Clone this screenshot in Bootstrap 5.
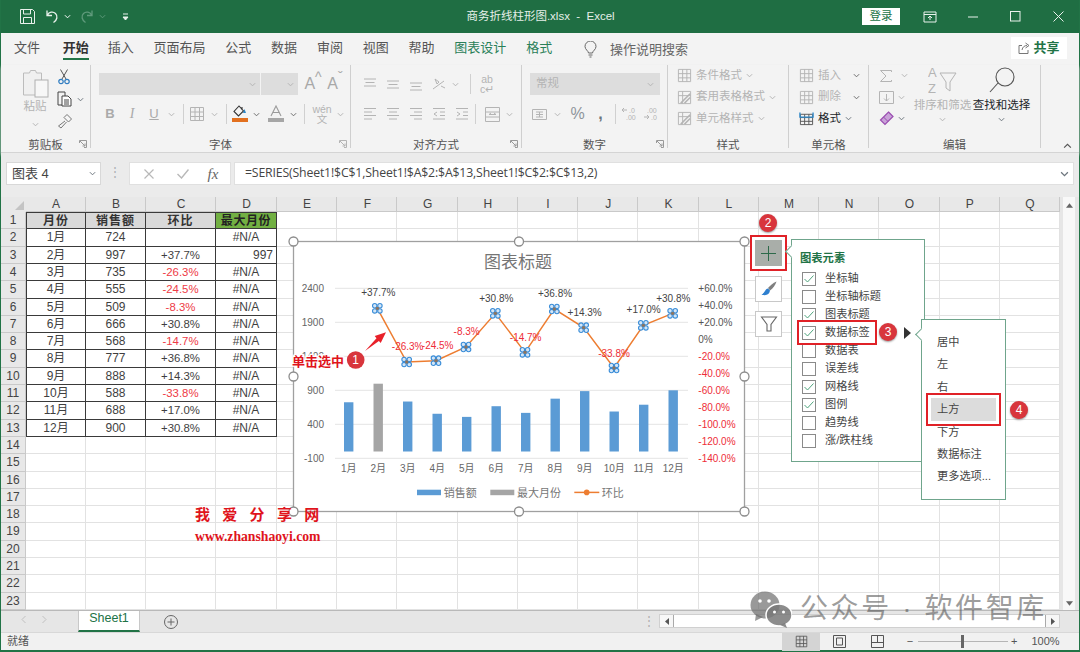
<!DOCTYPE html>
<html lang="zh-CN">
<head>
<meta charset="UTF-8">
<title>商务折线柱形图.xlsx - Excel</title>
<link href="https://cdn.jsdelivr.net/npm/bootstrap@5.3.3/dist/css/bootstrap.min.css" rel="stylesheet">
<style>
html, body { height: 100%; }
body { width: 1080px; height: 652px; overflow: hidden; background: #f3f3f3; color: #444;
  font-family: "Liberation Sans", "Noto Sans CJK SC", sans-serif; font-size: 12px; line-height: 1.2; position: relative; }
.win-edge { border-left: 1px solid #217346; border-right: 1px solid #217346; border-bottom: 2px solid #217346; height: 652px; }
svg { display: block; flex: none; }

/* title bar */
.title-bar { height: 33px; background: #1f6e43; color: #e6efe9; font-size: 11.5px; }
.title-side { flex: 1 1 0; }
.qat-start { margin-left: 18px; }
.title-end { margin-right: -1px; }
.login-btn { width: 38px; height: 17px; background: #fff; color: #217346; font-size: 11.5px; line-height: 17px; text-align: center; margin-right: 8px; }
.win-btn { width: 43px; }

/* tabs */
.tab-row { height: 32px; padding-left: 13px; gap: 19.8px; font-size: 13px; color: #555; position: relative; }
.tab-item { height: 32px; line-height: 29px; position: relative; }
.tab-on { font-weight: 700; color: #333; margin: 0 -1px 0 3px; }
.tab-on::after { content: ""; position: absolute; left: 0; right: 0; bottom: 5px; height: 2px; background: #217346; }
.tab-ctx { color: #2a8058; }
.tell-me { margin-left: 12px; gap: 13px; color: #666; }
.share-btn { position: absolute; left: 1010px; top: 4px; width: 56px; height: 22px; background: #fff; color: #217346; font-weight: 700; font-size: 13px; gap: 3px; }

/* ribbon */
.ribbon { height: 88px; border-bottom: 1px solid #d4d4d4; box-shadow: 0 2px 3px #d0d0d0; position: relative; }
.rb-group { height: 83px; border-right: 1px solid #cfcfcf; position: relative; flex: none; }
.rb-label { position: absolute; left: 0; right: 0; top: 73px; text-align: center; font-size: 11.5px; line-height: 14px; color: #555; }
.rb-launch { position: absolute; right: 3px; top: 75px; color: #999; }
.g-clip { width: 90px; } .g-font { width: 260px; padding-left: 8px; } .g-align { width: 171px; padding-left: 8px; }
.g-num { width: 146px; padding-left: 8px; } .g-style { width: 121px; padding-left: 9px; } .g-cell { width: 80px; padding-left: 10px; } .g-edit { width: 172px; padding-left: 10px; }
.rb-row1 { height: 22px; margin-top: 8px; }
.rb-row2 { height: 24px; margin-top: 7px; }
.off { color: #b4b4b4; }
.mid { color: #6a6a6a; }
.cell-c { display: flex; align-items: center; justify-content: center; flex: none; }
.w4 { width: 4px; } .w6 { width: 6px; } .w10 { width: 10px; } .w12 { width: 12px; } .w14 { width: 14px; } .w16 { width: 16px; } .w18 { width: 18px; } .w20 { width: 20px; } .w22 { width: 22px; } .w23 { width: 23px; } .w30 { width: 30px; }
.rb-sep { width: 1px; height: 20px; background: #d0d0d0; }
.combo-a { width: 161px; height: 22px; background: #dddddd; }
.combo-b { width: 37px; height: 22px; background: #dddddd; margin-left: 1px; }
.combo-c { width: 130px; height: 22px; background: #dddddd; padding: 0 6px; color: #b4b4b4; font-size: 11.5px; }
.combo-ch { margin-left: auto; }
.letter-a { font-size: 16px; color: #a8a8a8; line-height: 16px; }
.txt-b { font-weight: 700; font-size: 13px; color: #aaa; }
.txt-i { font-style: italic; font-family: "Liberation Serif", serif; font-size: 14px; color: #aaa; }
.clip-col { width: 52px; padding-left: 16px; padding-top: 3px; }
.clip-txt { font-size: 11.5px; color: #b4b4b4; margin-top: 2px; }
.clip-tools { gap: 6px; padding-top: 4px; }
.st-row { height: 21.5px; gap: 4px; font-size: 11.5px; }
.st-wrap { margin-top: 0; }
.big-col { width: 59px; text-align: center; font-size: 11.5px; }
.big-ico { height: 34px; }
.ed-left { width: 34px; }
.collapse-up { position: absolute; left: 1062px; top: 78px; color: #555; }

/* formula bar */
.f-bar { height: 44px; background: #ebebeb; padding-top: 9px; padding-left: 5px; position: relative; }
.f-name { width: 95px; height: 23px; background: #fff; border: 1px solid #d8d8d8; padding: 0 4px 0 5px; font-size: 13px; }
.f-dots { width: 28px; }
.f-btns { width: 102px; height: 23px; background: #fff; border: 1px solid #e0e0e0; }
.f-input { width: 840px; height: 23px; background: #fff; border: 1px solid #e0e0e0; margin-left: 3px; padding: 0 4px 0 10px; color: #444; font-size: 12.3px; font-family: "Open Sans", "Liberation Sans", sans-serif; letter-spacing: -.17px; }
.fx-mark { font-family: "Liberation Serif", serif; font-style: italic; font-size: 15px; color: #666; }

/* sheet */
.sheet-zone { height: 413px; background: #e6e6e6; }
.xl-grid { width: 1059px; height: 413px; display: grid; grid-template-columns: 25px 60px 60px 70px 61px repeat(13, 1fr); grid-template-rows: 15px repeat(23, 1fr); background: #fff; overflow: hidden; }
.xc { border-right: 1px solid #e2e2e2; border-bottom: 1px solid #e2e2e2; color: #3f3f3f; font-size: 12px; line-height: 16px; text-align: center; white-space: nowrap; overflow: hidden; }
.xh { background: #e8e8e8; border-color: #c9c9c9; color: #444; }
.xcol { line-height: 15px; padding-left: 1px; }
.xcorner { background: #e8e8e8; border-color: #c9c9c9; position: relative; }
.xcorner::after { content: ""; position: absolute; right: 2px; bottom: 2px; border-style: solid; border-width: 0 0 9px 9px; border-color: transparent transparent #c4c4c4 transparent; }
.xd { border-color: #3a3a3a; }
.xd-top { border-top: 1px solid #3a3a3a; }
.xd-left { border-left: 1px solid #3a3a3a; }
.xb { font-weight: 700; background: #d9d9d9; color: #333; letter-spacing: 1px; }
.xg { font-weight: 700; background: #72b043; color: #222; letter-spacing: .6px; }
.xr { text-align: right; padding-right: 3px; }
.xp { font-size: 11.4px; }
.xneg { color: #ee3b46; }
.vscroll { width: 12px; height: 413px; margin-left: 3px; background: #f8f8f8; color: #666; padding: 6px 0 4px; }

/* sheet tabs */
.tabs-bar { height: 22px; background: #e6e6e6; border-top: 1px solid #b9b9b9; position: relative; }
.tabs-nav { width: 77px; padding-left: 20px; color: #c0c0c0; }
.sheet-tab { width: 62px; height: 21px; background: #fff; color: #217346; font-size: 12.5px; line-height: 15px; text-align: center; border-bottom: 2px solid #217346; border-left: 1px solid #c8c8c8; border-right: 1px solid #c8c8c8; }
.add-sheet { margin-left: 24px; color: #666; }
.h-dots { width: 8px; margin-left: 465px; color: #b0b0b0; }
.hscroll { width: 401px; height: 14px; margin-left: 8px; margin-top: 3px; background: #f7f7f7; border: 1px solid #d0d0d0; color: #555; }
.h-end { width: 13px; height: 12px; }
.h-thumb { height: 12px; background: #fff; border-left: 1px solid #aaa; border-right: 1px solid #aaa; flex: 1 1 0; }
.status-bar { height: 18px; background: #f1f1f1; border-top: 1px solid #d8d8d8; font-size: 11px; color: #555; padding-left: 6px; }
.view-on { width: 38px; height: 18px; background: #d4d4d4; margin-left: 753px; }
.view-btn { width: 38px; height: 18px; color: #555; }
.zoom-minus { width: 10px; margin-left: 9px; text-align: center; }
.zoom-track { width: 90px; height: 1px; background: #b5b5b5; position: relative; margin: 0 3px; }
.zoom-track::after { content: ""; position: absolute; left: 43px; top: -6px; width: 3px; height: 13px; background: #666; }
.zoom-pct { margin-left: 14px; }

/* what floats over the sheet */
.chart-svg { position: absolute; left: 285px; top: 235px; }
.tool-btn { position: absolute; left: 755px; width: 27px; height: 26px; background: #fff; border: 1px solid #c8c8c8; }
.tool-plus { top: 240px; background: #a9aea9; border-color: #a9aea9; box-shadow: 0 0 0 3px #fff, 0 0 0 5px #e02127; }
.tool-brush { top: 276px; }
.tool-filter { top: 311px; }
.chart-pane { position: absolute; left: 791px; top: 239px; width: 134px; height: 223px; background: #fff; border: 1px solid #6fa58c; padding: 10px 0 0 10px; }
.pane-title { color: #217346; font-weight: 700; font-size: 11.3px; line-height: 16px; margin: 0 0 4px -2px; }
.pane-notch { position: absolute; width: 9px; height: 9px; background: #fff; border-left: 1px solid #6fa58c; border-bottom: 1px solid #6fa58c; transform: rotate(45deg); }
.notch-a { left: -5px; top: 7px; }
.notch-b { left: -5px; top: 10px; }
.check-row { height: 18px; gap: 9px; font-size: 11.2px; color: #444; }
.check-box { width: 14px; height: 14px; background: #fff; border: 1px solid #8a8a8a; flex: none; }
.check-hit { position: relative; z-index: 1; }
.check-hit::before { content: ""; position: absolute; left: -5px; top: -4px; width: 80px; height: 25px; background: #fff; border: 2px solid #e02127; z-index: -1; }
.sub-menu { position: absolute; left: 921px; top: 319px; width: 85px; height: 181px; background: #fff; border: 1px solid #6fa58c; padding: 11px 0 0 9px; }
.sub-item { width: 65px; height: 22.4px; line-height: 22.4px; padding-left: 6px; font-size: 11.2px; color: #444; }
.sub-on { background: #dcdcdc; box-shadow: 0 0 0 3px #fff, 0 0 0 5px #e02127; position: relative; z-index: 1; }
.play-arrow { position: absolute; left: 904px; top: 327px; border-style: solid; border-width: 6px 0 6px 7px; border-color: transparent transparent transparent #333; }
.step-badge { position: absolute; width: 18px; height: 18px; background: #d8353c; color: #fff; font-size: 12px; line-height: 18px; text-align: center; box-shadow: 0 1px 2px #999; z-index: 2; }
.step-2 { left: 759px; top: 214px; }
.step-3 { left: 879px; top: 323px; }
.step-4 { left: 1010px; top: 401px; }
.mark-cn { position: absolute; left: 195px; top: 505px; color: #e0141c; font-size: 15px; font-weight: 700; letter-spacing: 12.3px; line-height: 20px; white-space: nowrap; }
.mark-url { position: absolute; left: 195px; top: 529px; color: #e0141c; font-family: "Liberation Serif", serif; font-size: 13.7px; font-weight: 700; line-height: 15px; white-space: nowrap; }
.wx-mark { position: absolute; left: 750px; top: 590px; gap: 8px; color: rgba(90, 90, 90, .6); font-size: 28px; line-height: 36px; letter-spacing: 2.6px; white-space: nowrap; z-index: 3; }
</style>
</head>
<body>

<svg class="d-none">
  <symbol id="chev" viewBox="0 0 8 5"><path d="M1 1l3 3 3-3" fill="none" stroke="currentColor" stroke-width="1.1"/></symbol>
  <symbol id="al-top" viewBox="0 0 16 16"><path d="M2 3h12M3.500 6.500h9M2 10h12" fill="none" stroke="currentColor"/></symbol>
  <symbol id="al-mid" viewBox="0 0 16 16"><path d="M2 5h12M3.500 8.500h9M2 12h12" fill="none" stroke="currentColor"/></symbol>
  <symbol id="al-bot" viewBox="0 0 16 16"><path d="M2 7h12M3.500 10.500h9M2 14h12" fill="none" stroke="currentColor"/></symbol>
  <symbol id="al-left" viewBox="0 0 16 16"><path d="M2 2.500h12M2 6h8M2 9.500h12M2 13h8" fill="none" stroke="currentColor"/></symbol>
  <symbol id="al-center" viewBox="0 0 16 16"><path d="M2 2.500h12M4 6h8M2 9.500h12M4 13h8" fill="none" stroke="currentColor"/></symbol>
  <symbol id="al-right" viewBox="0 0 16 16"><path d="M2 2.500h12M6 6h8M2 9.500h12M6 13h8" fill="none" stroke="currentColor"/></symbol>
  <symbol id="al-out" viewBox="0 0 16 16"><path d="M2 2.500h12M9 6h5M9 9.500h5M2 13h12M6 6L3 8l3 2" fill="none" stroke="currentColor"/></symbol>
  <symbol id="al-in" viewBox="0 0 16 16"><path d="M2 2.500h12M9 6h5M9 9.500h5M2 13h12M3 6l3 2-3 2" fill="none" stroke="currentColor"/></symbol>
  <symbol id="tbl" viewBox="0 0 16 16"><path d="M1.500 1.500h13v13h-13zM1.500 6h13M1.500 10.500h13M6 1.500v13M10.500 1.500v13" fill="none" stroke="currentColor"/></symbol>
  <symbol id="tbl-slash" viewBox="0 0 16 16"><path d="M1.500 1.500h13v13h-13zM1.500 6h13M6 1.500v13" fill="none" stroke="currentColor"/><path d="M4 14L14 4M8 14l6-6" stroke="currentColor" stroke-width="1.600"/></symbol>
</svg>

<div class="win-edge d-flex flex-column">

  <!-- title bar -->
  <div class="title-bar d-flex align-items-center">
    <div class="title-side d-flex align-items-center">
      <svg class="qat-start" width="17" height="17" viewBox="0 0 17 17"><path d="M1.500 1.500h12l2 2v12h-14zM4.500 1.500v4.500h7V1.500M4.500 15.500v-6h8v6" fill="none" stroke="#e9f1ec"/></svg>
      <svg class="ms-2" width="16" height="16" viewBox="0 0 16 16"><path d="M3 1.500v5h5M3.500 6C5 3 9 2 11.500 4.500c2.500 2.500 1.800 6.500-2 9" fill="none" stroke="#e9f1ec" stroke-width="1.300"/></svg>
      <svg class="ms-1 text-white" width="7" height="5"><use href="#chev"/></svg>
      <svg class="ms-2" width="16" height="16" viewBox="0 0 16 16"><path d="M13 1.500v5H8M12.500 6C11 3 7 2 4.500 4.500c-2.500 2.500-1.800 6.500 2 9" fill="none" stroke="#5f9a7b" stroke-width="1.300"/></svg>
      <svg class="ms-1" width="7" height="5" color="#5f9a7b"><use href="#chev"/></svg>
      <svg class="ms-3" width="7" height="8" viewBox="0 0 7 8"><path d="M1 1h5M1 4l2.500 3L6 4z" fill="#e9f1ec" stroke="#e9f1ec"/></svg>
    </div>
    <div>商务折线柱形图.xlsx&nbsp; - &nbsp;Excel</div>
    <div class="title-side title-end d-flex align-items-center justify-content-end">
      <div class="login-btn">登录</div>
      <div class="win-btn cell-c"><svg width="14" height="12" viewBox="0 0 14 12"><path d="M1 1h12v10H1zM1 3.500h12M7 5v4M5 7l2-2 2 2" fill="none" stroke="#e9f1ec"/></svg></div>
      <div class="win-btn cell-c"><svg width="10" height="2"><path d="M0 1h10" stroke="#e9f1ec"/></svg></div>
      <div class="win-btn cell-c"><svg width="11" height="11"><rect x=".5" y=".5" width="9.500" height="9.500" fill="none" stroke="#e9f1ec"/></svg></div>
      <div class="win-btn cell-c"><svg width="11" height="11"><path d="M.5.500l10 10M10.500.500l-10 10" stroke="#e9f1ec"/></svg></div>
    </div>
  </div>

  <!-- tabs -->
  <div class="tab-row d-flex">
    <div class="tab-item">文件</div>
    <div class="tab-item tab-on">开始</div>
    <div class="tab-item">插入</div>
    <div class="tab-item">页面布局</div>
    <div class="tab-item">公式</div>
    <div class="tab-item">数据</div>
    <div class="tab-item">审阅</div>
    <div class="tab-item">视图</div>
    <div class="tab-item">帮助</div>
    <div class="tab-item tab-ctx">图表设计</div>
    <div class="tab-item tab-ctx">格式</div>
    <div class="tab-item tell-me d-flex align-items-center">
      <svg width="13" height="17" viewBox="0 0 13 17"><path d="M4.500 12c0-2-3.500-3.500-3.500-6.500a5.500 5.500 0 0111 0C12 8.500 8.500 10 8.500 12zM4.500 14h4M5.500 16h2" fill="none" stroke="#666"/></svg>
      <span>操作说明搜索</span>
    </div>
    <div class="share-btn d-flex align-items-center justify-content-center">
      <svg width="12" height="12" viewBox="0 0 12 12"><path d="M4 3.500H1v8h9V8M4 8c.500-3 2.500-4.500 5-4.500M7.500 1L11 3.500 7.500 6" fill="none" stroke="#777"/></svg>
      <span>共享</span>
    </div>
  </div>

  <!-- ribbon -->
  <div class="ribbon d-flex">

    <div class="rb-group g-clip d-flex">
      <div class="clip-col d-flex flex-column align-items-center">
        <svg width="27" height="30" viewBox="0 0 27 30"><path d="M1.500 5h6l1-2.500h5l1 2.500h5v22h-18z" fill="#f0f0f0" stroke="#bcbcbc"/><rect x="13" y="12" width="13" height="17" fill="#f7f7f7" stroke="#b0b0b0"/></svg>
        <div class="clip-txt">粘贴</div>
        <svg class="off mt-2" width="7" height="5"><use href="#chev"/></svg>
      </div>
      <div class="clip-tools d-flex flex-column ps-1">
        <svg width="14" height="16" viewBox="0 0 14 16"><path d="M3.500 0.500L9 10M10.500 0.500L5 10" stroke="#555" fill="none"/><circle cx="4" cy="12.500" r="2.200" fill="none" stroke="#2f7cc1" stroke-width="1.200"/><circle cx="10" cy="12.500" r="2.200" fill="none" stroke="#2f7cc1" stroke-width="1.200"/></svg>
        <div class="d-flex align-items-center">
          <svg width="16" height="16" viewBox="0 0 16 16"><path d="M1 1h7v4M5 14H1V1" fill="none" stroke="#444"/><path d="M5 5h6l3 3v7H5zM7 9h5M7 11h5M7 13h5" fill="#fff" stroke="#444"/></svg>
          <svg class="ms-1 text-secondary" width="7" height="5"><use href="#chev"/></svg>
        </div>
        <svg width="16" height="16" viewBox="0 0 16 16"><path d="M10 1.500l4.500 4.500-3 3L7 4.500zM8 8L1.500 13l2.500 2 5.500-6" fill="#f5f5f5" stroke="#777"/></svg>
      </div>
      <div class="rb-label">剪贴板</div>
      <svg class="rb-launch" width="8" height="8" viewBox="0 0 8 8"><path d="M.5 3V.500H7.500V7.500H5M1 1l5 5M6 3.500V6H3.500" fill="none" stroke="currentColor"/></svg>
    </div>

    <div class="rb-group g-font">
      <div class="rb-row1 d-flex align-items-center">
        <div class="combo-a d-flex align-items-center pe-1"><svg class="combo-ch off" width="7" height="5"><use href="#chev"/></svg></div>
        <div class="combo-b d-flex align-items-center pe-1"><svg class="combo-ch off" width="7" height="5"><use href="#chev"/></svg></div>
        <div class="cell-c w22 ms-1 letter-a">A<sup class="small">^</sup></div>
        <div class="cell-c w22 letter-a">A<sup class="small">ˇ</sup></div>
      </div>
      <div class="rb-row2 d-flex align-items-center">
        <div class="cell-c w22 txt-b">B</div>
        <div class="cell-c w22 txt-i">I</div>
        <div class="cell-c w22 txt-b fw-normal text-decoration-underline">U</div>
        <div class="cell-c w12 off"><svg width="7" height="5"><use href="#chev"/></svg></div>
        <div class="cell-c w12"><div class="rb-sep"></div></div>
        <div class="cell-c w16 off"><svg width="16" height="16"><use href="#tbl"/></svg></div>
        <div class="cell-c w18 off"><svg width="7" height="5"><use href="#chev"/></svg></div>
        <div class="cell-c w6"><div class="rb-sep"></div></div>
        <div class="cell-c w22"><svg width="16" height="18" viewBox="0 0 16 18"><path d="M7 1l-5 5.500 4.500 4.500 5-5zM10 2v3" fill="none" stroke="#333" stroke-width="1.100"/><path d="M12.500 4l1.500 4h-3z" fill="#2a86c8"/><rect y="13" width="16" height="4" fill="#e2701f"/></svg></div>
        <div class="cell-c w10 mid"><svg width="7" height="5"><use href="#chev"/></svg></div>
        <div class="cell-c w30"><svg width="16" height="18" viewBox="0 0 16 18"><path d="M3 11L8 1l5 10M5 7.500h6" fill="none" stroke="#9a9a9a" stroke-width="1.100"/><rect y="13" width="16" height="4" fill="#a6a6a6"/></svg></div>
        <div class="cell-c w4 mid"><svg width="7" height="5"><use href="#chev"/></svg></div>
        <div class="cell-c w18"><div class="rb-sep"></div></div>
        <div class="cell-c w18 off lh-1 flex-column"><span class="small">wén</span><span class="small">文</span></div>
        <div class="cell-c w18 off"><svg width="7" height="5"><use href="#chev"/></svg></div>
      </div>
      <div class="rb-label">字体</div>
      <svg class="rb-launch off" width="8" height="8" viewBox="0 0 8 8"><path d="M.5 3V.500H7.500V7.500H5M1 1l5 5M6 3.500V6H3.500" fill="none" stroke="currentColor"/></svg>
    </div>

    <div class="rb-group g-align off">
      <div class="rb-row1 d-flex align-items-center">
        <div class="cell-c w22"><svg width="16" height="16"><use href="#al-top"/></svg></div>
        <div class="cell-c w23"><svg width="16" height="16"><use href="#al-mid"/></svg></div>
        <div class="cell-c w23"><svg width="16" height="16"><use href="#al-bot"/></svg></div>
        <div class="cell-c w23"><svg width="16" height="16" viewBox="0 0 16 16"><path d="M2 13L13 5M4 3l4 3-2 2zM10 10l4 2" fill="none" stroke="currentColor"/></svg></div>
        <div class="cell-c w10"><svg width="7" height="5"><use href="#chev"/></svg></div>
        <div class="cell-c w20"><div class="rb-sep"></div></div>
        <div class="cell-c w14 lh-1 flex-column"><span class="small">ab</span><span class="small">c↵</span></div>
      </div>
      <div class="rb-row2 d-flex align-items-center">
        <div class="cell-c w22"><svg width="16" height="16"><use href="#al-left"/></svg></div>
        <div class="cell-c w23"><svg width="16" height="16"><use href="#al-center"/></svg></div>
        <div class="cell-c w23"><svg width="16" height="16"><use href="#al-right"/></svg></div>
        <div class="cell-c w23"><svg width="16" height="16"><use href="#al-out"/></svg></div>
        <div class="cell-c w23"><svg width="16" height="16"><use href="#al-in"/></svg></div>
        <div class="cell-c w4"><div class="rb-sep"></div></div>
        <div class="cell-c w22 ms-1"><svg width="15" height="15" viewBox="0 0 15 15"><path d="M.5.500h14v14H.5zM.5 5h14M.5 10h14M4 7.500h7M4 7.500l2-1.500M11 7.500l-2-1.500" fill="none" stroke="currentColor"/></svg></div>
        <div class="cell-c w12"><svg width="7" height="5"><use href="#chev"/></svg></div>
      </div>
      <div class="rb-label">对齐方式</div>
      <svg class="rb-launch" width="8" height="8" viewBox="0 0 8 8"><path d="M.5 3V.500H7.500V7.500H5M1 1l5 5M6 3.500V6H3.500" fill="none" stroke="currentColor"/></svg>
    </div>

    <div class="rb-group g-num off">
      <div class="rb-row1 d-flex align-items-center">
        <div class="combo-c d-flex align-items-center"><span>常规</span><svg class="combo-ch" width="7" height="5"><use href="#chev"/></svg></div>
      </div>
      <div class="rb-row2 d-flex align-items-center">
        <div class="cell-c w18"><svg width="15" height="15" viewBox="0 0 15 15"><path d="M.5 2.500h14v10H.5zM4 5h7M4 7.500h7M4 10h7M7.500 5v5" fill="none" stroke="currentColor"/></svg></div>
        <div class="cell-c w18"><svg width="7" height="5"><use href="#chev"/></svg></div>
        <div class="cell-c w23 fs-6 text-secondary opacity-75">%</div>
        <div class="cell-c w23 fw-bold fs-6 text-secondary">,</div>
        <div class="cell-c w6"><div class="rb-sep"></div></div>
        <div class="cell-c w22"><svg width="16" height="16" viewBox="0 0 16 16"><path d="M6 4L1 4M3 2L1 4l2 2" fill="none" stroke="currentColor"/><text x="8" y="7" font-size="7" fill="currentColor">.0</text><text x="5" y="14" font-size="7" fill="currentColor">.00</text></svg></div>
        <div class="cell-c w22"><svg width="16" height="16" viewBox="0 0 16 16"><path d="M1 11h5M4 9l2 2-2 2" fill="none" stroke="currentColor"/><text x="4" y="7" font-size="7" fill="currentColor">.00</text><text x="8" y="14" font-size="7" fill="currentColor">.0</text></svg></div>
      </div>
      <div class="rb-label">数字</div>
      <svg class="rb-launch" width="8" height="8" viewBox="0 0 8 8"><path d="M.5 3V.500H7.500V7.500H5M1 1l5 5M6 3.500V6H3.500" fill="none" stroke="currentColor"/></svg>
    </div>

    <div class="rb-group g-style off">
      <div class="st-wrap d-flex flex-column">
        <div class="st-row d-flex align-items-center"><svg width="15" height="15"><use href="#tbl"/></svg><span>条件格式</span><svg width="7" height="5"><use href="#chev"/></svg></div>
        <div class="st-row d-flex align-items-center"><svg width="15" height="15"><use href="#tbl-slash"/></svg><span>套用表格格式</span><svg width="7" height="5"><use href="#chev"/></svg></div>
        <div class="st-row d-flex align-items-center"><svg width="15" height="15"><use href="#tbl-slash"/></svg><span>单元格样式</span><svg width="7" height="5"><use href="#chev"/></svg></div>
      </div>
      <div class="rb-label">样式</div>
    </div>

    <div class="rb-group g-cell">
      <div class="st-wrap d-flex flex-column">
        <div class="st-row off d-flex align-items-center"><svg width="15" height="15"><use href="#tbl"/></svg><span>插入</span><svg class="ms-2 mid" width="7" height="5"><use href="#chev"/></svg></div>
        <div class="st-row off d-flex align-items-center"><svg width="15" height="15"><use href="#tbl"/></svg><span>删除</span><svg class="ms-2 mid" width="7" height="5"><use href="#chev"/></svg></div>
        <div class="st-row d-flex align-items-center"><svg width="15" height="15" viewBox="0 0 16 16"><path d="M1.500 3.500h13v11h-13zM1.500 7h13M1.500 11h13M6 3.500v11M10.500 3.500v11" fill="none" stroke="#555"/><path d="M1 1.500v5h14v-5" fill="none" stroke="#2a86c8" stroke-width="1.400"/></svg><span class="text-dark">格式</span><svg class="text-secondary" width="7" height="5"><use href="#chev"/></svg></div>
      </div>
      <div class="rb-label">单元格</div>
    </div>

    <div class="rb-group g-edit d-flex">
      <div class="ed-left st-wrap d-flex flex-column off">
        <div class="st-row d-flex align-items-center"><svg width="14" height="14" viewBox="0 0 14 14"><path d="M12.500 3V1.500h-11L7 7l-5.500 5.500h11V11" fill="none" stroke="currentColor"/></svg><svg class="ms-1" width="7" height="5"><use href="#chev"/></svg></div>
        <div class="st-row d-flex align-items-center"><svg width="15" height="15" viewBox="0 0 15 15"><path d="M.5 1.500h14v12H.5zM7.500 4v7M5 8.500L7.500 11 10 8.500" fill="none" stroke="currentColor"/></svg><svg width="7" height="5"><use href="#chev"/></svg></div>
        <div class="st-row d-flex align-items-center"><svg width="15" height="15" viewBox="0 0 15 15"><path d="M9.500 1L14 5.500 6 13.500 1.500 9z" fill="#c9a3d8" stroke="#9a4db0" stroke-width="1.200"/><path d="M4.500 6l4.500 4.500" stroke="#9a4db0"/></svg><svg class="text-secondary" width="7" height="5"><use href="#chev"/></svg></div>
      </div>
      <div class="big-col off d-flex flex-column align-items-center">
        <div class="big-ico"><svg width="30" height="34" viewBox="0 0 30 34"><text x="0" y="12" font-size="13" fill="currentColor">A</text><text x="0" y="28" font-size="13" fill="currentColor">Z</text><path d="M12 8h16l-6 9v9l-4-3v-6z" fill="none" stroke="currentColor"/></svg></div>
        <div class="text-nowrap">排序和筛选</div>
        <svg class="mt-1" width="7" height="5"><use href="#chev"/></svg>
      </div>
      <div class="big-col d-flex flex-column align-items-center text-dark">
        <div class="big-ico"><svg width="30" height="34" viewBox="0 0 30 34"><circle cx="18" cy="12" r="9" fill="none" stroke="#555" stroke-width="1.100"/><path d="M11 18L3 27" stroke="#555" stroke-width="1.100"/></svg></div>
        <div class="text-nowrap">查找和选择</div>
        <svg class="mt-1 text-secondary" width="7" height="5"><use href="#chev"/></svg>
      </div>
      <div class="rb-label">编辑</div>
    </div>

    <svg class="collapse-up" width="9" height="6" viewBox="0 0 8 5"><path d="M1 4l3-3 3 3" fill="none" stroke="currentColor"/></svg>
  </div>

  <!-- formula bar -->
  <div class="f-bar d-flex align-items-start">
    <div class="f-name d-flex align-items-center justify-content-between"><span>图表 4</span><svg class="text-secondary" width="7" height="5"><use href="#chev"/></svg></div>
    <div class="f-dots cell-c text-secondary opacity-50 lh-1 flex-column pt-1"><span>⋮</span></div>
    <div class="f-btns d-flex align-items-center">
      <div class="cell-c w30 ms-1"><svg width="10" height="10"><path d="M.5.500l9 9M9.500.500l-9 9" stroke="#b8b8b8" stroke-width="1.200"/></svg></div>
      <div class="cell-c w30 ms-1"><svg width="12" height="10"><path d="M.5 5l4 4 7-8.500" fill="none" stroke="#b8b8b8" stroke-width="1.400"/></svg></div>
      <div class="cell-c w30 fx-mark">fx</div>
    </div>
    <div class="f-input d-flex align-items-center justify-content-between"><span>=SERIES(Sheet1!$C$1,Sheet1!$A$2:$A$13,Sheet1!$C$2:$C$13,2)</span><svg class="text-secondary" width="9" height="6"><use href="#chev"/></svg></div>
  </div>

  <!-- sheet -->
  <div class="sheet-zone d-flex">
    <div class="xl-grid" id="grid"></div>
    <div class="vscroll d-flex flex-column justify-content-between align-items-center">
      <svg width="7" height="5" viewBox="0 0 8 5"><path d="M4 0l4 5H0z" fill="currentColor"/></svg>
      <svg width="7" height="5" viewBox="0 0 8 5"><path d="M4 5l4-5H0z" fill="currentColor"/></svg>
    </div>
  </div>

  <!-- sheet tabs -->
  <div class="tabs-bar d-flex align-items-start">
    <div class="tabs-nav d-flex align-items-center mt-1">
      <svg width="5" height="9" viewBox="0 0 5 9"><path d="M4.500 1L1 4.500 4.500 8" fill="none" stroke="currentColor"/></svg>
      <svg class="ms-3" width="5" height="9" viewBox="0 0 5 9"><path d="M.5 1L4 4.500.5 8" fill="none" stroke="currentColor"/></svg>
    </div>
    <div class="sheet-tab">Sheet1</div>
    <div class="add-sheet mt-1"><svg width="14" height="14" viewBox="0 0 14 14"><circle cx="7" cy="7" r="6.500" fill="none" stroke="currentColor"/><path d="M7 3.500v7M3.500 7h7" stroke="currentColor"/></svg></div>
    <div class="h-dots lh-1 mt-1">⋮</div>
    <div class="hscroll d-flex align-items-center">
      <div class="h-end cell-c"><svg width="4" height="7" viewBox="0 0 4 7"><path d="M4 0L0 3.500 4 7z" fill="currentColor"/></svg></div>
      <div class="h-thumb"></div>
      <div class="h-end cell-c"><svg width="4" height="7" viewBox="0 0 4 7"><path d="M0 0l4 3.500L0 7z" fill="currentColor"/></svg></div>
    </div>
  </div>

  <!-- status bar -->
  <div class="status-bar d-flex align-items-center">
    <span>就绪</span>
    <div class="view-on cell-c"><svg width="13" height="13"><use href="#tbl"/></svg></div>
    <div class="view-btn cell-c"><svg width="13" height="13" viewBox="0 0 13 13"><path d="M.5.500h12v12H.5zM3.500 3h6v7h-6z" fill="none" stroke="currentColor"/></svg></div>
    <div class="view-btn cell-c"><svg width="13" height="13" viewBox="0 0 13 13"><path d="M.5.500h12v12H.5zM6.500.5v7M.5 7.500h12" fill="none" stroke="currentColor"/></svg></div>
    <div class="zoom-minus">−</div>
    <div class="zoom-track"></div>
    <div>+</div>
    <div class="zoom-pct">100%</div>
  </div>
</div>

<!-- chart over the sheet -->
<svg class="chart-svg" id="chart" width="470" height="285" viewBox="285 235 470 285"></svg>

<div class="tool-btn tool-plus cell-c"><svg width="15" height="15"><path d="M7.500 0v15M0 7.500h15" stroke="#2d6a4a"/></svg></div>
<div class="tool-btn tool-brush cell-c"><svg width="18" height="18" viewBox="0 0 18 18"><path d="M16.500 1.500C13 3 10 5.500 8 8l2 2.500c3-2 5.500-5.500 6.500-9z" fill="#7f7f7f"/><path d="M8 8.500c-3 .500-3 4.500-6.500 6 4 1.500 8 .500 8.500-4z" fill="#2e7fcf"/></svg></div>
<div class="tool-btn tool-filter cell-c"><svg width="18" height="18" viewBox="0 0 18 18"><path d="M1.500 2h15L11 9.500V16H7V9.500z" fill="none" stroke="#666" stroke-width="1.100"/></svg></div>

<div class="chart-pane">
  <div class="pane-notch notch-a"></div>
  <div class="pane-title">图表元素</div>
  <div id="checks"></div>
</div>

<div class="play-arrow"></div>

<div class="sub-menu">
  <div class="pane-notch notch-b"></div>
  <div class="sub-item">居中</div>
  <div class="sub-item">左</div>
  <div class="sub-item">右</div>
  <div class="sub-item sub-on">上方</div>
  <div class="sub-item">下方</div>
  <div class="sub-item">数据标注</div>
  <div class="sub-item">更多选项...</div>
</div>

<div class="step-badge step-2 rounded-circle">2</div>
<div class="step-badge step-3 rounded-circle">3</div>
<div class="step-badge step-4 rounded-circle">4</div>

<div class="mark-cn">我爱分享网</div>
<div class="mark-url">www.zhanshaoyi.com</div>

<div class="wx-mark d-flex align-items-center">
  <svg width="42" height="38" viewBox="0 0 42 38">
    <ellipse cx="15" cy="15" rx="14.500" ry="13.500" fill="rgba(110,110,110,.7)"/>
    <path d="M6 24l-1 7 8-4z" fill="rgba(110,110,110,.7)"/>
    <ellipse cx="29" cy="25" rx="13" ry="11" fill="rgba(120,120,120,.85)" stroke="#fff" stroke-width="1.500"/>
    <path d="M35 33l2 5-7-3z" fill="rgba(120,120,120,.85)"/>
    <circle cx="10" cy="11" r="1.800" fill="#fff"/><circle cx="19" cy="11" r="1.800" fill="#fff"/>
    <circle cx="24.500" cy="22" r="1.500" fill="#fff"/><circle cx="33.500" cy="22" r="1.500" fill="#fff"/>
  </svg>
  <span>公众号 · 软件智库</span>
</div>

<script>
const rows = [
  ['1月', '724', '', '#N/A'], ['2月', '997', '+37.7%', '997'], ['3月', '735', '-26.3%', '#N/A'],
  ['4月', '555', '-24.5%', '#N/A'], ['5月', '509', '-8.3%', '#N/A'], ['6月', '666', '+30.8%', '#N/A'],
  ['7月', '568', '-14.7%', '#N/A'], ['8月', '777', '+36.8%', '#N/A'], ['9月', '888', '+14.3%', '#N/A'],
  ['10月', '588', '-33.8%', '#N/A'], ['11月', '688', '+17.0%', '#N/A'], ['12月', '900', '+30.8%', '#N/A']
];

// worksheet cells
let html = '<div class="xcorner"></div>';
'ABCDEFGHIJKLMNOPQ'.split('').forEach(c => html += `<div class="xc xh xcol">${c}</div>`);
for (let r = 1; r <= 23; r++) {
  html += `<div class="xc xh">${r}</div>`;
  for (let c = 0; c < 17; c++) {
    let cls = 'xc', txt = '';
    if (r === 1 && c < 4) {
      cls += ' xd xd-top ' + (c === 3 ? 'xg' : 'xb');
      txt = ['月份', '销售额', '环比', '最大月份'][c];
    } else if (r <= 13 && c < 4) {
      txt = rows[r - 2][c];
      cls += ' xd';
      if (c === 2) cls += txt[0] === '-' ? ' xp xneg' : ' xp';
      if (c === 3 && txt === '997') cls += ' xr';
    }
    if (r <= 13 && c === 0) cls += ' xd-left';
    html += `<div class="${cls}">${txt}</div>`;
  }
}
document.getElementById('grid').innerHTML = html;

// chart element check list
const checks = [['坐标轴', 1], ['坐标轴标题', 0], ['图表标题', 1], ['数据标签', 1], ['数据表', 0], ['误差线', 0], ['网格线', 1], ['图例', 1], ['趋势线', 0], ['涨/跌柱线', 0]];
document.getElementById('checks').innerHTML = checks.map(([name, on]) => `
  <div class="check-row d-flex align-items-center${name === '数据标签' ? ' check-hit' : ''}">
    <span class="check-box cell-c">${on ? '<svg width="10" height="8"><path d="M.5 4l3 3 6-6.500" fill="none" stroke="#4fa37c"/></svg>' : ''}</span>
    <span>${name}</span>
  </div>`).join('');

// chart, in page coordinates
const Z = (x, y) => [285 + x / 3, 235 + y / 3];
const sales = rows.map(r => +r[1]);
const catX = i => 348.7 + i * 29.5;
const base = 451.5;
let s = '<rect x="293.5" y="241.5" width="451" height="270" fill="#fff" stroke="#a0a0a0" stroke-width="1.3"/>';
s += '<text x="518" y="268" text-anchor="middle" font-size="17" fill="#757575">图表标题</text>';

[288.3, 322.3, 356.3, 390.3, 424.3, 458.3].forEach(y => s += `<path d="M335 ${y}H688" stroke="#e4e4e4"/>`);
['2400', '1900', '1400', '900', '400', '-100'].forEach((t, i) => s += `<text x="324" y="${291.8 + i * 34}" text-anchor="end" font-size="10" fill="#666">${t}</text>`);
['+60.0%', '+40.0%', '+20.0%', '0%', '-20.0%', '-40.0%', '-60.0%', '-80.0%', '-100.0%', '-120.0%', '-140.0%'].forEach((t, i) =>
  s += `<text x="698.3" y="${291.8 + i * 17}" font-size="10" fill="${i < 4 ? '#555' : '#ee2c38'}">${t}</text>`);

sales.forEach((v, i) => {
  const h = v * 34 / 500;
  s += `<rect x="${catX(i) - 4.7}" y="${base - h}" width="9.4" height="${h}" fill="${i === 1 ? '#a5a5a5' : '#5b9bd5'}"/>`;
  s += `<text x="${catX(i)}" y="471.500" text-anchor="middle" font-size="10" fill="#666">${rows[i][0]}</text>`;
});

const pts = [[277, 220], [365, 381], [453, 377], [543, 336], [631, 235], [720, 352], [808, 222], [896, 278], [987, 399], [1075, 271], [1163, 235]].map(p => Z(p[0], p[1]));
s += `<polyline points="${pts.map(p => p.join(',')).join(' ')}" fill="none" stroke="#ed7d31" stroke-width="1.500"/>`;
pts.forEach(([x, y]) => {
  [[-2.6, -2.6], [2.6, -2.6], [-2.6, 2.6], [2.6, 2.6]].forEach(([a, b]) =>
    s += `<circle cx="${x + a}" cy="${y + b}" r="2.200" fill="#d5e6f6" stroke="#3a8dd8" stroke-width="1.100"/>`);
  s += `<circle cx="${x}" cy="${y}" r="1.700" fill="#8c7460"/>`;
});

const labels = [[280, 172, '+37.7%'], [368, 334, '-26.3%'], [458, 330, '-24.5%'], [545, 290, '-8.3%'], [634, 190, '+30.8%'], [722, 306, '-14.7%'], [810, 175, '+36.8%'], [899, 233, '+14.3%'], [987, 354, '-33.8%'], [1076, 224, '+17.0%'], [1165, 190, '+30.8%']];
labels.forEach(([x, y, t]) => {
  const [px, py] = Z(x, y);
  s += `<text x="${px}" y="${py + 3.5}" text-anchor="middle" font-size="10" fill="${t[0] === '-' ? '#ee2c38' : '#444'}">${t}</text>`;
});

// legend
s += '<rect x="417" y="489.7" width="24" height="5.5" fill="#5b9bd5"/><text x="443.700" y="496.500" font-size="11" fill="#777">销售额</text>';
s += '<rect x="490.300" y="489.7" width="24" height="5.5" fill="#a5a5a5"/><text x="517" y="496.500" font-size="11" fill="#777">最大月份</text>';
s += '<path d="M574.300 492.400h25" stroke="#ed7d31" stroke-width="1.500"/><circle cx="586.700" cy="492.400" r="2.800" fill="#ed7d31"/><text x="601.700" y="496.500" font-size="11" fill="#777">环比</text>';

// selection handles
[[293.5, 241.5], [519, 241.5], [744.5, 241.5], [293.5, 376.5], [744.5, 376.5], [293.5, 511.5], [519, 511.5], [744.5, 511.5]].forEach(([x, y]) =>
  s += `<circle cx="${x}" cy="${y}" r="4.500" fill="#fff" stroke="#8c8c8c" stroke-width="1.300"/>`);

// note pointing at the line
s += '<text x="292" y="366" font-size="13" font-weight="700" fill="#e0141c" stroke="#fff" stroke-width="2.500" paint-order="stroke">单击选中</text>';
s += '<circle cx="355.700" cy="360" r="8.800" fill="#d8353c"/><text x="355.700" y="364.200" text-anchor="middle" font-size="12" fill="#fff">1</text>';
s += '<polygon points="365,351 376.5,338.2 374.7,336.1 386,332.3 380.7,342.9 378.9,340.9" fill="#e8212a"/>';
document.getElementById('chart').innerHTML = s;
</script>
<script src="https://cdn.jsdelivr.net/npm/bootstrap@5.3.3/dist/js/bootstrap.bundle.min.js"></script>
</body>
</html>
